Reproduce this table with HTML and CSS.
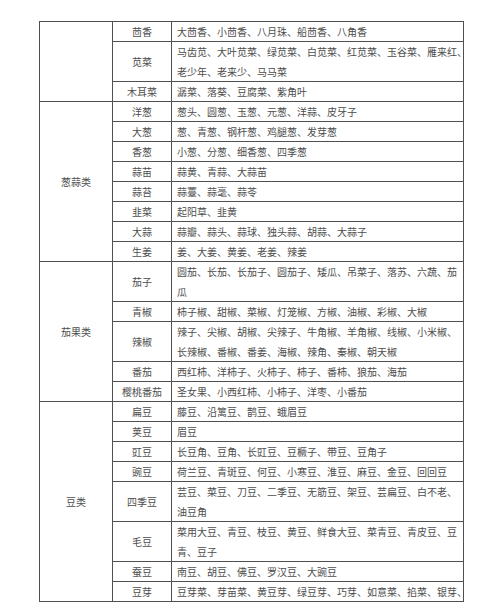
FILE: index.html
```html
<!DOCTYPE html>
<html lang="zh-CN">
<head>
<meta charset="utf-8">
<title>蔬菜别名表</title>
<link rel="stylesheet" href="styles.css">
</head>
<body>
<div class="page">
<table class="veg">
<colgroup>
<col class="c-cat"><col class="c-name"><col class="c-alias">
</colgroup>
<tbody>
<tr><td class="cat" rowspan="3"></td><td class="name">茴香</td><td class="alias">大茴香、小茴香、八月珠、船茴香、八角香</td></tr>
<tr class="dbl"><td class="name">苋菜</td><td class="alias">马齿苋、大叶苋菜、绿苋菜、白苋菜、红苋菜、玉谷菜、雁来红、<br>老少年、老来少、马马菜</td></tr>
<tr><td class="name">木耳菜</td><td class="alias">潺菜、落葵、豆腐菜、紫角叶</td></tr>

<tr><td class="cat" rowspan="8">葱蒜类</td><td class="name">洋葱</td><td class="alias">葱头、圆葱、玉葱、元葱、洋蒜、皮牙子</td></tr>
<tr><td class="name">大葱</td><td class="alias">葱、青葱、钢杆葱、鸡腿葱、发芽葱</td></tr>
<tr><td class="name">香葱</td><td class="alias">小葱、分葱、细香葱、四季葱</td></tr>
<tr><td class="name">蒜苗</td><td class="alias">蒜黄、青蒜、大蒜苗</td></tr>
<tr><td class="name">蒜苔</td><td class="alias">蒜薹、蒜毫、蒜苓</td></tr>
<tr><td class="name">韭菜</td><td class="alias">起阳草、韭黄</td></tr>
<tr><td class="name">大蒜</td><td class="alias">蒜瓣、蒜头、蒜球、独头蒜、胡蒜、大蒜子</td></tr>
<tr><td class="name">生姜</td><td class="alias">姜、大姜、黄姜、老姜、辣姜</td></tr>

<tr class="dbl"><td class="cat" rowspan="5">茄果类</td><td class="name">茄子</td><td class="alias">圆茄、长茄、长茄子、圆茄子、矮瓜、吊菜子、落苏、六蔬、茄<br>瓜</td></tr>
<tr><td class="name">青椒</td><td class="alias">柿子椒、甜椒、菜椒、灯笼椒、方椒、油椒、彩椒、大椒</td></tr>
<tr class="dbl"><td class="name">辣椒</td><td class="alias">辣子、尖椒、胡椒、尖辣子、牛角椒、羊角椒、线椒、小米椒、<br>长辣椒、番椒、番姜、海椒、辣角、秦椒、朝天椒</td></tr>
<tr><td class="name">番茄</td><td class="alias">西红柿、洋柿子、火柿子、柿子、番柿、狼茄、海茄</td></tr>
<tr><td class="name">樱桃番茄</td><td class="alias">圣女果、小西红柿、小柿子、洋枣、小番茄</td></tr>

<tr><td class="cat" rowspan="8">豆类</td><td class="name">扁豆</td><td class="alias">藤豆、沿篱豆、鹊豆、蛾眉豆</td></tr>
<tr><td class="name">荚豆</td><td class="alias">眉豆</td></tr>
<tr><td class="name">豇豆</td><td class="alias">长豆角、豆角、长豇豆、豆橛子、带豆、豆角子</td></tr>
<tr><td class="name">豌豆</td><td class="alias">荷兰豆、青斑豆、何豆、小寒豆、淮豆、麻豆、金豆、回回豆</td></tr>
<tr class="dbl"><td class="name">四季豆</td><td class="alias">芸豆、菜豆、刀豆、二季豆、无筋豆、架豆、芸扁豆、白不老、<br>油豆角</td></tr>
<tr class="dbl"><td class="name">毛豆</td><td class="alias">菜用大豆、青豆、枝豆、黄豆、鲜食大豆、菜青豆、青皮豆、豆<br>青、豆子</td></tr>
<tr><td class="name">蚕豆</td><td class="alias">南豆、胡豆、佛豆、罗汉豆、大豌豆</td></tr>
<tr><td class="name">豆芽</td><td class="alias">豆芽菜、芽苗菜、黄豆芽、绿豆芽、巧芽、如意菜、掐菜、银芽、</td></tr>
</tbody>
</table>
</div>
</body>
</html>
```

FILE: styles.css
```css
html, body {
  margin: 0;
  padding: 0;
  background: #ffffff;
}

.page {
  padding: 21px 0 0 39px;
}

.veg {
  border-collapse: collapse;
  table-layout: fixed;
  width: 424px;
  font-family: "Noto Sans CJK SC", "Noto Sans", sans-serif;
  font-size: 10px;
  color: #4d4d4d;
}

.c-cat { width: 73px; }
.c-name { width: 59px; }
.c-alias { width: 292px; }

.veg td {
  border: 1px solid #505050;
  padding: 0;
  height: 19px;
  line-height: 19px;
  vertical-align: middle;
  white-space: nowrap;
}

.veg tr.dbl td {
  height: 39px;
  line-height: 19.5px;
}

.veg td.cat {
  text-align: center;
  height: auto;
}

.veg td.name {
  text-align: center;
}

.veg td.alias {
  text-align: left;
  padding-left: 5px;
}
```
